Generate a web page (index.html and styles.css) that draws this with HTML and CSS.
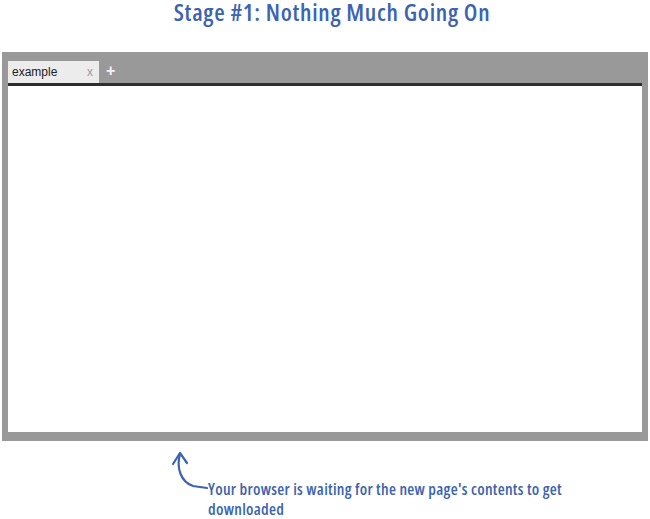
FILE: index.html
```html
<!DOCTYPE html>
<html>
<head>
<meta charset="utf-8">
<link rel="stylesheet" href="styles.css">
</head>
<body>
<h1 class="title">Stage #1: Nothing Much Going On</h1>
<div class="frame">
  <div class="tabbar">
    <div class="tab"><span class="tab-label">example</span><span class="tab-close">x</span></div>
    <span class="tab-add">+</span>
  </div>
  <div class="rule"></div>
  <div class="viewport"></div>
</div>
<div class="note">
  <svg class="arrow" width="40" height="44" viewBox="0 0 40 44">
    <path d="M9 4 C 5 18, 10 32, 22 36 L 36 38" fill="none" stroke="#3c63b2" stroke-width="2.2" stroke-linecap="round"/>
    <path d="M2 14 L 9 3 L 16 13" fill="none" stroke="#3c63b2" stroke-width="2.2" stroke-linecap="round" stroke-linejoin="round"/>
  </svg>
  <p class="note-text">Your browser is waiting for the new page's contents to get downloaded</p>
</div>
</body>
</html>
```
FILE: styles.css
```css
body {
  margin: 0;
  background: #fff;
  width: 650px;
  height: 519px;
  overflow: hidden;
}
.title {
  margin: 0;
  padding: 0 0 0 14px;
  height: 52px;
  box-sizing: border-box;
  text-align: center;
  font-family: "Open Sans", "DejaVu Sans", sans-serif;
  font-stretch: 75%;
  font-weight: 600;
  font-size: 24px;
  line-height: 24px;
  letter-spacing: 0.7px;
  color: #3c63b2;
}
.frame {
  margin: 0 2px;
  width: 646px;
  box-sizing: border-box;
  background: #999;
  padding: 0 6px 9px 6px;
}
.tabbar {
  height: 31px;
  display: flex;
  align-items: flex-end;
}
.tab {
  width: 91px;
  height: 22px;
  box-sizing: border-box;
  background: #ececec;
  display: flex;
  align-items: center;
  justify-content: space-between;
  padding: 0 6px 0 4px;
  font-family: "Liberation Sans", Arial, sans-serif;
  font-size: 12px;
}
.tab-label {
  color: #222;
}
.tab-close {
  color: #999;
  font-size: 12px;
}
.tab-add {
  height: 22px;
  margin-left: 7px;
  color: #f2f2f2;
  font-family: "Liberation Sans", Arial, sans-serif;
  font-weight: bold;
  font-size: 16px;
  line-height: 20px;
}
.rule {
  height: 3px;
  background: #2e2e2e;
}
.viewport {
  height: 346px;
  background: #fff;
}
.note {
  display: flex;
  align-items: flex-start;
  margin: 9px 0 0 171px;
}
.arrow {
  flex: none;
}
.note-text {
  margin: 29px 0 0 -3px;
  width: 410px;
  font-family: "Open Sans", "DejaVu Sans", sans-serif;
  font-stretch: 75%;
  font-weight: 600;
  font-size: 16px;
  line-height: 20px;
  letter-spacing: 0.3px;
  color: #3c63b2;
}
```
